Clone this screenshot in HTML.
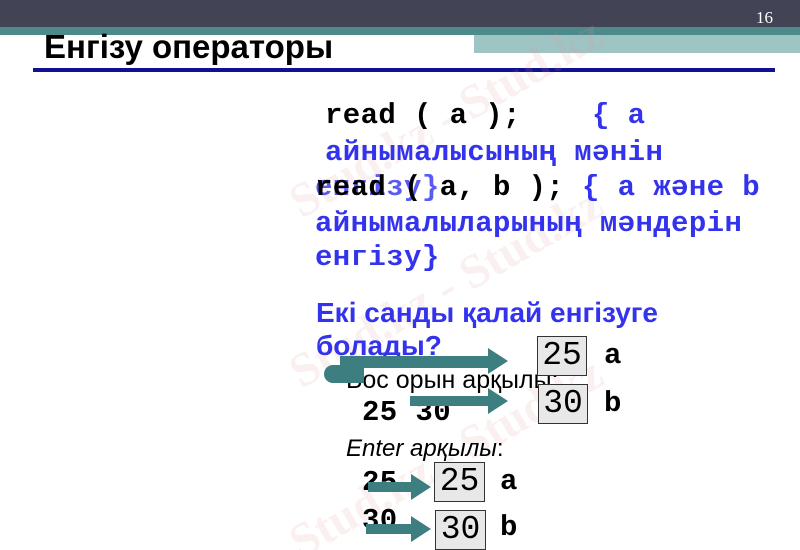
<!DOCTYPE html>
<html><head><meta charset="utf-8"><style>
*{margin:0;padding:0}
html,body{width:800px;height:550px;overflow:hidden}
body{position:relative;background:#fff;font-family:"Liberation Sans",sans-serif}
.a{position:absolute;white-space:pre}
.m{font-family:"Liberation Mono",monospace;font-weight:bold;font-size:29px;letter-spacing:0.4px;line-height:30px}
.bl{color:#3333ee}
.box{position:absolute;border:1px solid #333;background:#e8e8e8;font-family:"Liberation Mono",monospace;font-size:33px;line-height:38px;text-align:center;color:#000}
.wm{position:absolute;color:rgba(230,150,150,.14);font-family:"Liberation Serif",serif;font-weight:bold;font-size:48px;transform:rotate(-30deg);white-space:nowrap}
.arr{position:absolute;height:10px;background:#3d7f80}
.arr:after{content:"";position:absolute;right:-18px;top:-8px;border-left:20px solid #3d7f80;border-top:13px solid transparent;border-bottom:13px solid transparent}
</style></head><body>
<div class="a" style="left:0;top:0;width:800px;height:28px;background:#424355"></div>
<div class="a" style="left:0;top:27px;width:800px;height:8px;background:#4c8a8c"></div>
<div class="a" style="left:474px;top:35px;width:326px;height:18px;background:#9fc4c4"></div>
<div class="a" style="left:756px;top:8px;font-family:'Liberation Serif',serif;font-size:17px;color:#fff">16</div>
<div class="a" style="left:44px;top:28px;font-size:33px;font-weight:bold;color:#000">Енгізу операторы</div>
<div class="a" style="left:33px;top:68px;width:742px;height:4px;background:#101090"></div>

<div class="wm" style="left:270px;top:90px">Stud.kz - Stud.kz</div>
<div class="wm" style="left:270px;top:260px">Stud.kz - Stud.kz</div>
<div class="wm" style="left:270px;top:430px">Stud.kz - Stud.kz</div>

<div class="a m" style="left:325px;top:101px">read ( a );    <span class="bl">{ a</span></div>
<div class="a m bl" style="left:325px;top:138px">айнымалысының мәнін</div>
<div class="a m bl" style="left:315px;top:173px;opacity:.8">енгізу}</div>
<div class="a m" style="left:315px;top:173px">read ( a, b ); <span class="bl">{ a және b</span></div>
<div class="a m bl" style="left:315px;top:209px">айнымалыларының мәндерін</div>
<div class="a m bl" style="left:315px;top:243px">енгізу}</div>

<div class="a" style="left:316px;top:296px;font-size:28px;font-weight:bold;color:#3333ee;line-height:33px">Екі санды қалай енгізуге<br>болады?</div>
<div class="a" style="left:346px;top:366px;font-size:25px;color:#000">Бос орын арқылы:</div>
<div class="a m" style="left:362px;top:398px">25 30</div>
<div class="a" style="left:346px;top:435px;font-size:24px;font-style:italic;color:#000">Enter арқылы<span style="font-style:normal">:</span></div>
<div class="a m" style="left:362px;top:468px">25</div>
<div class="a m" style="left:362px;top:506px">30</div>

<div class="a" style="left:324px;top:365px;width:40px;height:18px;background:#3d7f80;border-radius:20px 0 0 20px"></div>
<div class="arr" style="left:340px;top:356px;width:150px;height:12px"></div>
<div class="arr" style="left:410px;top:396px;width:80px"></div>
<div class="arr" style="left:368px;top:482px;width:45px"></div>
<div class="arr" style="left:366px;top:524px;width:47px"></div>

<div class="box" style="left:537px;top:336px;width:48px;height:38px">25</div>
<div class="a m" style="left:604px;top:341px">a</div>
<div class="box" style="left:538px;top:384px;width:48px;height:38px">30</div>
<div class="a m" style="left:604px;top:389px">b</div>
<div class="box" style="left:434px;top:462px;width:49px;height:38px">25</div>
<div class="a m" style="left:500px;top:467px">a</div>
<div class="box" style="left:435px;top:510px;width:49px;height:38px">30</div>
<div class="a m" style="left:500px;top:513px">b</div>
</body></html>
